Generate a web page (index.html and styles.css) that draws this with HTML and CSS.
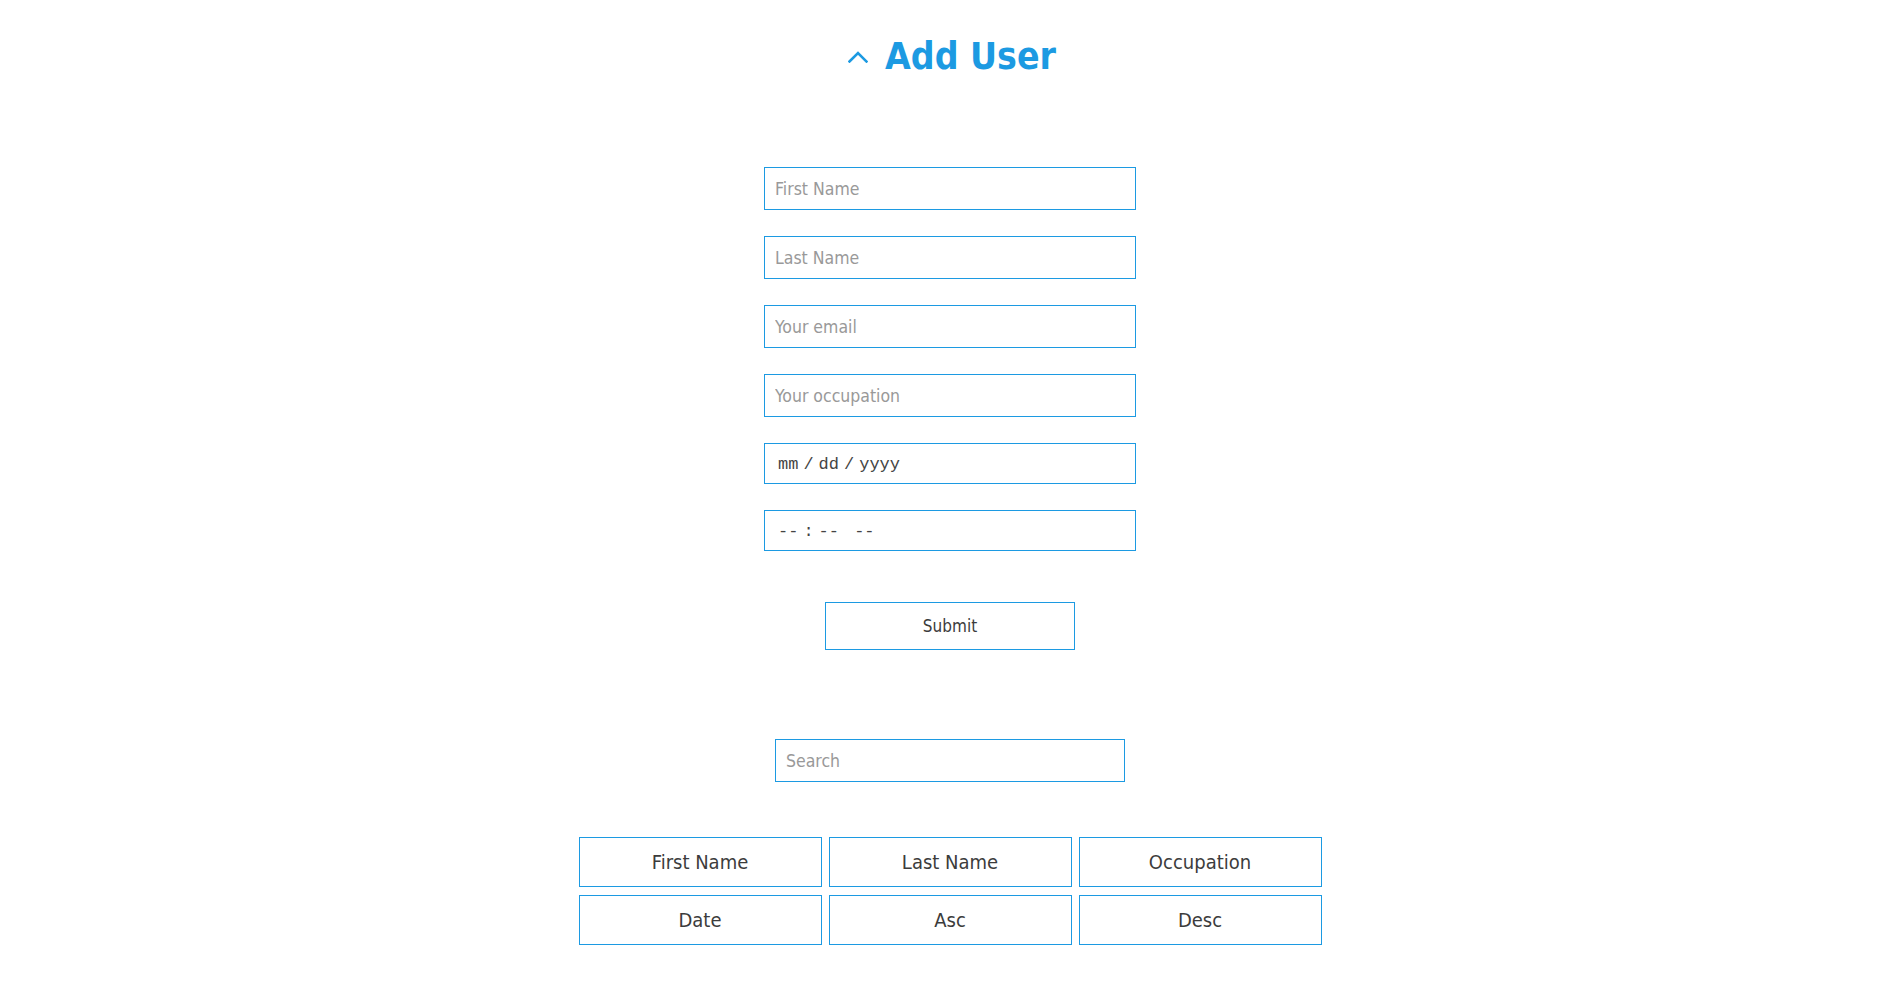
FILE: index.html
```html
<!DOCTYPE html>
<html lang="en">
<head>
<meta charset="utf-8">
<title>Add User</title>
<link rel="stylesheet" href="styles.css">
</head>
<body>
<main class="page">
  <header class="title-bar">
    <button class="toggle" type="button" aria-label="Collapse form">
      <svg class="chevron" width="20" height="12" viewBox="0 0 20 12" aria-hidden="true">
        <polyline points="1.5,10.5 10,2 18.5,10.5" fill="none" stroke="currentColor" stroke-width="2.6" stroke-linecap="square" stroke-linejoin="miter"/>
      </svg>
    </button>
    <h1 class="title">Add User</h1>
  </header>

  <form class="user-form">
    <input class="field" type="text" placeholder="First Name">
    <input class="field" type="text" placeholder="Last Name">
    <input class="field" type="email" placeholder="Your email">
    <input class="field" type="text" placeholder="Your occupation">
    <input class="field field-mono" type="date">
    <input class="field field-mono" type="time">
    <button class="submit" type="submit">Submit</button>
  </form>

  <section class="list-controls">
    <input class="search" type="search" placeholder="Search">
    <div class="sort-grid">
      <button class="sort-btn" type="button">First Name</button>
      <button class="sort-btn" type="button">Last Name</button>
      <button class="sort-btn" type="button">Occupation</button>
      <button class="sort-btn" type="button">Date</button>
      <button class="sort-btn" type="button">Asc</button>
      <button class="sort-btn" type="button">Desc</button>
    </div>
  </section>
</main>
</body>
</html>
```

FILE: styles.css
```css
* {
  box-sizing: border-box;
}

body {
  margin: 0;
  background: #ffffff;
  font-family: "DejaVu Sans", "Noto Sans", sans-serif;
  font-stretch: condensed;
  color: #3c3c3c;
}

.page {
  display: flex;
  flex-direction: column;
  align-items: center;
  padding-left: 2px;
}

.title-bar {
  display: flex;
  align-items: center;
  gap: 17px;
  margin-top: 32px;
  height: 50px;
  padding-left: 4px;
}

.toggle {
  display: flex;
  align-items: center;
  padding: 0;
  margin: 0;
  border: 0;
  background: transparent;
  color: #1c9ae2;
  cursor: pointer;
}

.title {
  margin: 0;
  font-size: 37px;
  line-height: 50px;
  font-weight: bold;
  color: #1c9ae2;
}

.user-form {
  display: flex;
  flex-direction: column;
  align-items: center;
  gap: 26px;
  margin-top: 85px;
}

.field {
  width: 372px;
  height: 43px;
  margin: 0;
  padding: 1px 10px 0;
  border: 1px solid #1c9ae2;
  border-radius: 0;
  outline: none;
  background: #fff;
  font-family: inherit;
  font-stretch: condensed;
  font-size: 17.5px;
  color: #3c3c3c;
}

.field::placeholder,
.search::placeholder {
  color: #999999;
}

.field-mono {
  height: 41px;
  padding-left: 12px;
  font-family: "Liberation Mono", "DejaVu Sans Mono", monospace;
  font-size: 17px;
  color: #444;
}

.field-mono::-webkit-calendar-picker-indicator {
  display: none;
}

.field-mono::-webkit-datetime-edit-text {
  padding: 0 4px;
}

.submit {
  width: 250px;
  height: 48px;
  margin-top: 25px;
  border: 1px solid #1c9ae2;
  border-radius: 0;
  background: #fff;
  font-family: inherit;
  font-stretch: condensed;
  font-size: 17px;
  color: #3c3c3c;
  cursor: pointer;
}

.list-controls {
  display: flex;
  flex-direction: column;
  align-items: center;
  margin-top: 89px;
}

.search {
  width: 350px;
  height: 43px;
  margin: 0;
  padding: 1px 10px 0;
  border: 1px solid #1c9ae2;
  border-radius: 0;
  outline: none;
  background: #fff;
  font-family: inherit;
  font-stretch: condensed;
  font-size: 17.5px;
  color: #3c3c3c;
  -webkit-appearance: none;
  appearance: none;
}

.sort-grid {
  display: grid;
  grid-template-columns: repeat(3, 243px);
  column-gap: 7px;
  row-gap: 8px;
  margin-top: 55px;
}

.sort-btn {
  height: 50px;
  margin: 0;
  border: 1px solid #1c9ae2;
  border-radius: 0;
  background: #fff;
  font-family: inherit;
  font-stretch: condensed;
  font-size: 20px;
  color: #3c3c3c;
  cursor: pointer;
}
```
